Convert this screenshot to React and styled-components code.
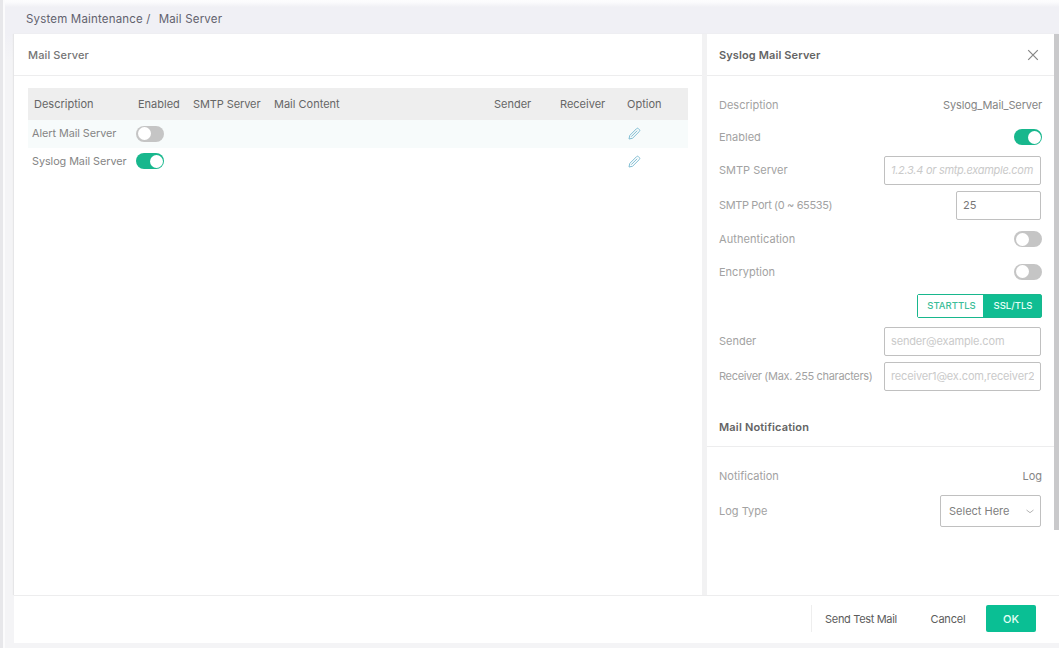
import React from "react";
import styled, { createGlobalStyle } from "styled-components";

const GlobalStyle = createGlobalStyle`
  * { box-sizing: border-box; }
  body {
    margin: 0;
    background: #f1f1f5;
    font-family: Inter, "Liberation Sans", sans-serif;
    font-size: 11px;
    color: #5c5c5c;
    overflow: hidden;
  }
  button, input { font: inherit; letter-spacing: inherit; }
`;

const Page = styled.div`
  display: flex;
  width: 1059px;
  height: 648px;
`;

const Rail = styled.div`
  width: 5px;
  flex: none;
  background: #e7e7ea;
  border-right: 2px solid #fbfbfc;
`;

const Main = styled.main`
  flex: 1;
  min-width: 0;
  display: flex;
  flex-direction: column;
  padding: 0 0 5px 9px;
  background: linear-gradient(#fdfdfe 0, #fcfcfd 2px, #f0f0f5 7px, #f0f0f5 34px, #f4f4f6 60px);
`;

const Breadcrumb = styled.nav`
  height: 34px;
  flex: none;
  display: flex;
  align-items: center;
  gap: 8px;
  padding: 3px 0 0 12px;
  font-size: 11.5px;
  letter-spacing: 0.18px;
  color: #62626e;
  white-space: pre;
`;

const Workspace = styled.div`
  flex: 1;
  min-height: 0;
  display: flex;
  background: #fff;
  box-shadow: -1px 0 1px #e6e6e8;
`;

const ListPane = styled.section`
  width: 688px;
  flex: none;
`;

const DetailPane = styled.section`
  width: 352px;
  border-left: 5px solid #f2f2f3;
`;

const Scrollbar = styled.div`
  width: 5px;
  height: 496px;
  flex: none;
  background: #c9c9cb;
`;

const PaneHeader = styled.header`
  height: ${(p) => p.$height || 42}px;
  margin-top: ${(p) => p.$top || 0}px;
  display: flex;
  align-items: center;
  justify-content: space-between;
  padding: 0 15px 0 ${(p) => p.$left || 12}px;
  border-bottom: 1px solid #ededee;
`;

const PaneTitle = styled.h2`
  margin: 0;
  font-size: 11px;
  font-weight: ${(p) => p.$weight || 500};
  letter-spacing: ${(p) => p.$spacing || 0}px;
  color: ${(p) => (p.$soft ? "#757575" : "#646464")};
`;

const IconButton = styled.button`
  display: flex;
  padding: 0;
  border: 0;
  background: none;
  color: ${(p) => p.$color || "#858585"};
`;

const Table = styled.div`
  margin: 12px 14px 0 14px;
`;

const TableRow = styled.div`
  display: grid;
  grid-template-columns: 104px 55px 81px 220px 66px 67px 1fr;
  align-items: center;
  height: ${(p) => (p.$head ? 32 : 27.5)}px;
  padding-left: ${(p) => (p.$head ? 6 : 4)}px;
  background: ${(p) => (p.$head ? "#eeeeee" : p.$tinted ? "#f7fbfb" : "transparent")};
  color: ${(p) => (p.$head ? "#666" : "#858585")};
  font-size: ${(p) => (p.$head ? 11 : 10.8)}px;
  white-space: nowrap;
`;

const Cell = styled.span`
  grid-column: ${(p) => p.$column || "auto"};
  letter-spacing: ${(p) => p.$spacing || 0}px;
  margin-left: ${(p) => p.$shift || 0}px;
`;

const Switch = styled.span`
  display: flex;
  justify-content: ${(p) => (p.$on ? "flex-end" : "flex-start")};
  width: 28px;
  height: 16px;
  padding: 1.5px;
  border-radius: 8px;
  background: ${(p) => (p.$on ? "#18b78d" : "#c5c5c5")};
  &::after {
    content: "";
    width: 13px;
    height: 13px;
    border-radius: 50%;
    background: #fff;
  }
`;

const Form = styled.div`
  display: grid;
  grid-template-rows: ${(p) => p.$rows};
  padding: ${(p) => p.$top || 12}px 12px 0 12px;
`;

const Field = styled.div`
  display: flex;
  align-items: center;
  justify-content: space-between;
  white-space: nowrap;
`;

const Label = styled.span`
  color: #a2a2a2;
  letter-spacing: ${(p) => p.$spacing || 0}px;
`;

const Value = styled.span`
  color: #858585;
  letter-spacing: ${(p) => p.$spacing || 0}px;
`;

const TextInput = styled.input`
  width: ${(p) => p.$width || 157}px;
  height: 29px;
  margin-right: 1px;
  padding: 0 6px;
  border: 1px solid #c0c0c0;
  border-radius: 2px;
  outline: 0;
  color: #777;
  background: #fff;
  letter-spacing: ${(p) => p.$spacing || 0}px;
  &::placeholder {
    color: #cacaca;
    font-style: ${(p) => (p.$italic ? "italic" : "normal")};
  }
`;

const Segments = styled.div`
  display: flex;
  height: 24px;
  margin-left: auto;
  border: 1px solid #18b78d;
  border-radius: 2px;
`;

const Segment = styled.button`
  width: ${(p) => p.$width}px;
  padding: 0 0 0 2px;
  border: 0;
  font-size: 9.5px;
  font-weight: 500;
  color: ${(p) => (p.$active ? "#e6fff7" : "#3bbd99")};
  background: ${(p) => (p.$active ? "#10bd92" : "#fff")};
`;

const Select = styled.button`
  display: flex;
  align-items: center;
  justify-content: space-between;
  width: 101px;
  height: 32px;
  margin-right: 1px;
  padding: 0 5px 0 8px;
  border: 1px solid #c0c0c0;
  border-radius: 2px;
  background: #fff;
  color: #808080;
`;

const Footer = styled.footer`
  height: 48px;
  flex: none;
  display: flex;
  align-items: center;
  justify-content: flex-end;
  padding: 0 23px 2px 0;
  border-top: 1px solid #ededee;
  background: #fff;
`;

const FooterButton = styled.button`
  width: ${(p) => p.$width}px;
  height: 27px;
  padding: 0;
  border: 0;
  border-left: ${(p) => (p.$divided ? "1px solid #eeeeee" : "0")};
  border-radius: ${(p) => (p.$primary ? 2 : 0)}px;
  background: ${(p) => (p.$primary ? "#0abf94" : "none")};
  color: ${(p) => (p.$primary ? "#e6fff7" : "#5c5c5c")};
  font-weight: ${(p) => (p.$primary ? 500 : 400)};
  letter-spacing: ${(p) => p.$spacing || 0}px;
`;

function Pencil() {
  return (
    <svg width="13" height="13" viewBox="0 0 13 13" fill="none" stroke="currentColor" strokeWidth="1">
      <path d="M1 12l.8-3.6L8.5 1.7q1-1 2 0l.8.8q1 1 0 2L4.6 11.2zM3.2 9.7l6-6" strokeLinejoin="round" />
    </svg>
  );
}

function Close() {
  return (
    <svg width="12" height="12" viewBox="0 0 12 12" fill="none" stroke="currentColor" strokeWidth="1.2">
      <path d="M1.2 1.2l9.6 9.6M10.8 1.2l-9.6 9.6" />
    </svg>
  );
}

function Chevron() {
  return (
    <svg width="10" height="6" viewBox="0 0 10 6" fill="none" stroke="#b5b5b5" strokeWidth="1">
      <path d="M1.5 2L5 4.7l3.5-2.7" />
    </svg>
  );
}

const servers = [
  { name: "Alert Mail Server", on: false },
  { name: "Syslog Mail Server", on: true },
];

export default function App() {
  return (
    <>
      <GlobalStyle />
      <Page>
        <Rail />
        <Main>
          <Breadcrumb>
            <span>System Maintenance /</span>
            <span>Mail Server</span>
          </Breadcrumb>
          <Workspace>
            <ListPane>
              <PaneHeader $left={14}>
                <PaneTitle $soft $spacing={0.12}>Mail Server</PaneTitle>
              </PaneHeader>
              <Table>
                <TableRow $head>
                  <Cell>Description</Cell>
                  <Cell>Enabled</Cell>
                  <Cell $spacing={-0.1}>SMTP Server</Cell>
                  <Cell>Mail Content</Cell>
                  <Cell>Sender</Cell>
                  <Cell>Receiver</Cell>
                  <Cell>Option</Cell>
                </TableRow>
                {servers.map((s) => (
                  <TableRow key={s.name} $tinted={!s.on}>
                    <Cell $spacing={-0.04}>{s.name}</Cell>
                    <Switch $on={s.on} />
                    <Cell $column={7} $shift={3}>
                      <IconButton $color="#7fbdd3" aria-label="Edit">
                        <Pencil />
                      </IconButton>
                    </Cell>
                  </TableRow>
                ))}
              </Table>
            </ListPane>
            <DetailPane>
              <PaneHeader>
                <PaneTitle $weight={600} $spacing={0.12}>Syslog Mail Server</PaneTitle>
                <IconButton aria-label="Close">
                  <Close />
                </IconButton>
              </PaneHeader>
              <Form $rows="33px 32px 34px 36px 32px 33px 35px 36px 34px">
                <Field>
                  <Label>Description</Label>
                  <Value $spacing={-0.12}>Syslog_Mail_Server</Value>
                </Field>
                <Field>
                  <Label>Enabled</Label>
                  <Switch $on />
                </Field>
                <Field>
                  <Label>SMTP Server</Label>
                  <TextInput $italic $spacing={-0.28} placeholder="1.2.3.4 or smtp.example.com" />
                </Field>
                <Field>
                  <Label $spacing={-0.37}>SMTP Port (0 ~ 65535)</Label>
                  <TextInput $width={85} defaultValue="25" />
                </Field>
                <Field>
                  <Label $spacing={0.07}>Authentication</Label>
                  <Switch />
                </Field>
                <Field>
                  <Label>Encryption</Label>
                  <Switch />
                </Field>
                <Field>
                  <Segments>
                    <Segment $width={65}>STARTTLS</Segment>
                    <Segment $width={58} $active>SSL/TLS</Segment>
                  </Segments>
                </Field>
                <Field>
                  <Label>Sender</Label>
                  <TextInput $spacing={-0.15} placeholder="sender@example.com" />
                </Field>
                <Field>
                  <Label $spacing={-0.33}>Receiver (Max. 255 characters)</Label>
                  <TextInput $spacing={-0.15} placeholder="receiver1@ex.com,receiver2@ex.com" />
                </Field>
              </Form>
              <PaneHeader $top={14} $height={40}>
                <PaneTitle $weight={600} $spacing={0.18}>Mail Notification</PaneTitle>
              </PaneHeader>
              <Form $top={13} $rows="32px 38px">
                <Field>
                  <Label>Notification</Label>
                  <Value>Log</Value>
                </Field>
                <Field>
                  <Label>Log Type</Label>
                  <Select>
                    Select Here
                    <Chevron />
                  </Select>
                </Field>
              </Form>
            </DetailPane>
            <Scrollbar />
          </Workspace>
          <Footer>
            <FooterButton $width={99} $divided $spacing={-0.33}>Send Test Mail</FooterButton>
            <FooterButton $width={76} $spacing={-0.2}>Cancel</FooterButton>
            <FooterButton $width={50} $primary>OK</FooterButton>
          </Footer>
        </Main>
      </Page>
    </>
  );
}
